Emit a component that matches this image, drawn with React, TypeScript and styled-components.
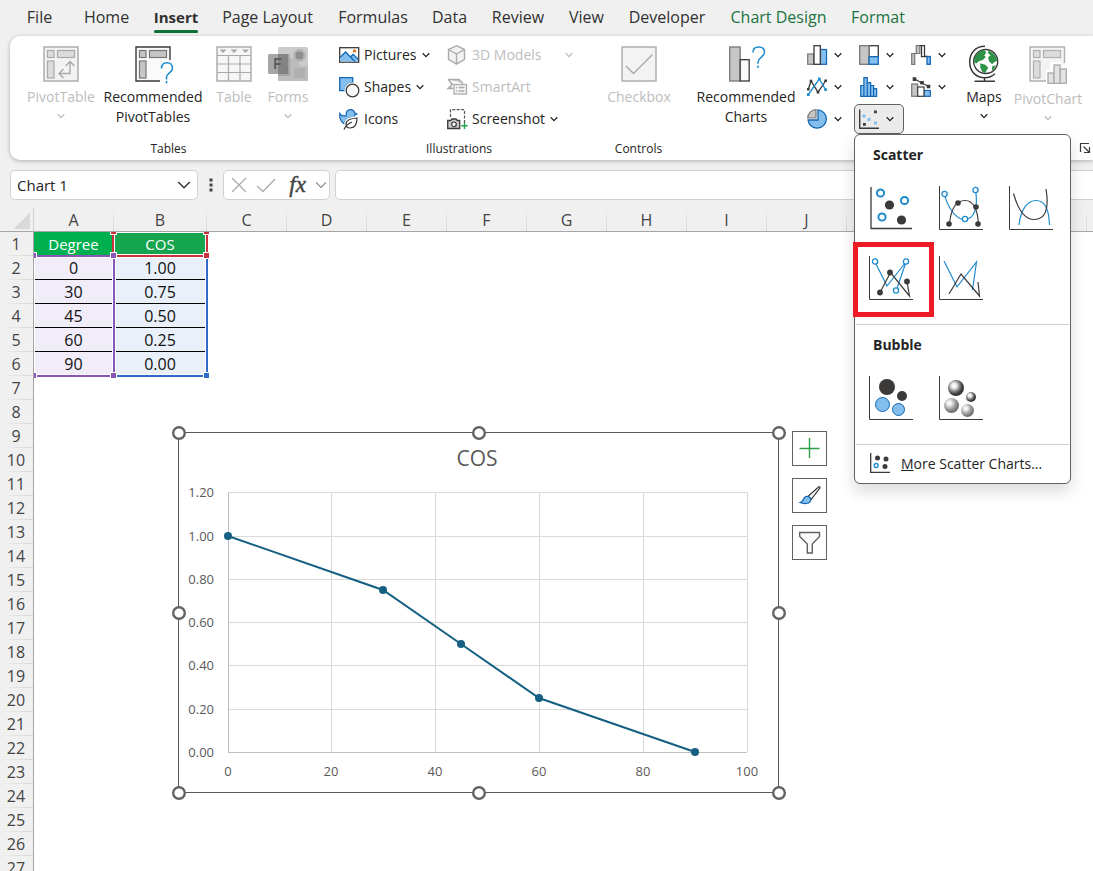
import React from "react";
import styled, { createGlobalStyle } from "styled-components";

const GlobalStyle = createGlobalStyle`
  *, *::before, *::after { box-sizing: border-box; }
  body {
    margin: 0;
    background: #f0f0f0;
    color: #242424;
    font-family: "Open Sans", "Noto Sans", sans-serif;
    font-size: 14px;
  }
  button { font: inherit; color: inherit; background: none; border: 0; padding: 0; }
  svg { display: block; flex: none; overflow: visible; }
`;

const INK = "#3b3a39";
const BLUE = "#1e8bcd";
const BLUE_FILL = "#83beec";
const BLUE_EDGE = "#1267b4";
const GREY_FILL = "#c8c6c4";

/* ---------- page ---------- */

const Page = styled.div`
  display: flex;
  flex-direction: column;
  height: 100vh;
  overflow: hidden;
`;

const TabBar = styled.nav`
  display: flex;
  height: 36px;
  padding-left: 15px;
`;

const Tab = styled.button<{ $w: number; $active?: boolean; $accent?: boolean }>`
  position: relative;
  min-width: ${(p) => p.$w}px;
  height: 34px;
  font-size: ${(p) => (p.$active ? 15 : 16)}px;
  line-height: 34px;
  white-space: nowrap;
  font-weight: ${(p) => (p.$active ? 700 : 400)};
  color: ${(p) => (p.$accent ? "#1a7340" : "#303030")};
  &::after {
    content: "";
    display: ${(p) => (p.$active ? "block" : "none")};
    position: absolute;
    left: 5px;
    right: 5px;
    bottom: 1px;
    height: 3px;
    border-radius: 2px;
    background: #0f7038;
  }
`;

const Ribbon = styled.div`
  position: relative;
  z-index: 5;
  display: flex;
  height: 124px;
  margin-left: 10px;
  background: #fff;
  border-radius: 10px 0 0 10px;
  box-shadow: 0 1px 4px rgba(0, 0, 0, 0.28);
`;

const Group = styled.section<{ $w?: number; $pad?: number }>`
  position: relative;
  display: flex;
  flex-direction: column;
  justify-content: space-between;
  width: ${(p) => (p.$w ? p.$w + "px" : "auto")};
  flex: ${(p) => (p.$w ? "none" : "1")};
  padding: 4px 0 3px ${(p) => p.$pad ?? 0}px;
  & + &::before {
    content: "";
    position: absolute;
    left: -1px;
    top: 6px;
    bottom: 8px;
    width: 1px;
    background: #d1d1d1;
  }
`;

const GroupBody = styled.div`
  display: flex;
`;

const GroupLabel = styled.div<{ $pull?: number }>`
  margin-left: -${(p) => p.$pull ?? 0}px;
  text-align: center;
  font-size: 12px;
  line-height: 16px;
`;

const BigButton = styled.button<{ $w: number; $off?: boolean }>`
  display: flex;
  flex-direction: column;
  align-items: center;
  gap: 5px;
  width: ${(p) => p.$w}px;
  padding-top: 6px;
  line-height: 20px;
  white-space: nowrap;
  color: ${(p) => (p.$off ? "#bdbdbd" : "#242424")};
`;

const BigText = styled.span`
  display: flex;
  flex-direction: column;
  align-items: center;
  gap: 5px;
`;

const Stack = styled.div<{ $w: number }>`
  display: flex;
  flex-direction: column;
  width: ${(p) => p.$w}px;
`;

const SmallButton = styled.button<{ $off?: boolean }>`
  display: flex;
  align-items: center;
  height: 32px;
  gap: 5px;
  padding-bottom: 2px;
  line-height: 20px;
  white-space: nowrap;
  color: ${(p) => (p.$off ? "#bdbdbd" : "#242424")};
`;

const Spacer = styled.span`
  width: 14px;
`;

const ChartGrid = styled.div`
  display: grid;
  grid-template-columns: repeat(3, 50px);
  grid-auto-rows: 30px;
  gap: 2px;
  margin: 0 0 0 2px;
`;

const MiniButton = styled.button<{ $open?: boolean }>`
  display: flex;
  align-items: center;
  gap: 7px;
  width: 50px;
  height: 30px;
  padding-left: 4px;
  border: 1px solid ${(p) => (p.$open ? "#616161" : "transparent")};
  border-radius: 5px;
  background: ${(p) => (p.$open ? "#ebebeb" : "transparent")};
`;

const MenuAnchor = styled.div`
  position: relative;
`;

const Launcher = styled.button`
  align-self: flex-end;
  margin: 0 3px 4px 0;
`;

/* ---------- scatter menu ---------- */

const Menu = styled.div`
  position: absolute;
  z-index: 10;
  top: 100%;
  left: 0;
  width: 217px;
  background: #fff;
  border: 1px solid #616161;
  border-radius: 6px;
  box-shadow: 0 8px 16px rgba(0, 0, 0, 0.14);
`;

const MenuTitle = styled.h3`
  margin: 0;
  padding: 10px 0 8px 18px;
  font-size: 14px;
  line-height: 20px;
  font-weight: 700;
`;

const Gallery = styled.div`
  display: grid;
  grid-template-columns: repeat(3, 70px);
  grid-auto-rows: 70px;
  padding-left: 1px;
`;

const GalleryItem = styled.button`
  position: relative;
  display: grid;
  place-items: center;
`;

const Highlight = styled.span`
  position: absolute;
  inset: -1px -8px -4px -3px;
  border: 5px solid #ed1c24;
  pointer-events: none;
`;

const Rule = styled.hr`
  margin: 11px 1px 0;
  border: 0;
  border-top: 1px solid #d1d1d1;
`;

const MenuItem = styled.button`
  display: flex;
  align-items: center;
  gap: 11px;
  width: 100%;
  height: 38px;
  padding: 0 0 2px 15px;
  white-space: nowrap;
`;

/* ---------- formula bar ---------- */

const FormulaBar = styled.div`
  display: flex;
  align-items: center;
  height: 30px;
  margin: 10px 0 0 10px;
`;

const Field = styled.div<{ $w?: number }>`
  display: flex;
  align-items: center;
  height: 30px;
  width: ${(p) => (p.$w ? p.$w + "px" : "auto")};
  flex: ${(p) => (p.$w ? "none" : "1")};
  padding: 0 6px;
  justify-content: space-between;
  background: #fff;
  border: 1px solid #d1d1d1;
  border-radius: 5px;
`;

const FxField = styled(Field)`
  padding: 0 2px 0 7px;
`;

const OpenField = styled(Field)`
  border-right: 0;
  border-radius: 5px 0 0 5px;
`;

const TextInput = styled.input`
  flex: 1;
  min-width: 0;
  border: 0;
  outline: 0;
  padding: 0;
  background: transparent;
  color: #242424;
  font: 15px "Open Sans", sans-serif;
`;

const Dots = styled.span`
  display: grid;
  place-items: center;
  width: 25px;
`;

const Fx = styled.button`
  padding-left: 4px;
  font: italic 400 23px/24px "Liberation Serif", serif;
  -webkit-text-stroke: 0.4px currentColor;
  color: #424242;
`;

const Gap = styled.span`
  width: 5px;
`;

/* ---------- sheet ---------- */

const Sheet = styled.main`
  position: relative;
  flex: 1;
  margin-top: 8px;
  overflow: hidden;
  background: linear-gradient(#f0f0f0 23px, #a6a6a6 23px, #a6a6a6 24px, #fff 24px);
`;

const Grid = styled.table`
  table-layout: fixed;
  width: 1087px;
  border-collapse: separate;
  border-spacing: 0;
  font-size: 16px;
  line-height: 22px;
  text-align: center;
  td, th { height: 24px; padding: 0 1px 0 0; font-weight: 400; }
`;

const ColHead = styled.th`
  color: #444;
  background: linear-gradient(#f0f0f0, #d6d6d6) right / 1px 100% no-repeat, #f0f0f0;
  border-bottom: 1px solid #a6a6a6;
`;

const Corner = styled.th`
  background: linear-gradient(135deg, transparent 50%, #d9d9d9 50%) 14px 5px / 16px 16px no-repeat, #f0f0f0;
  border-right: 1px solid #d0d0d0;
  border-bottom: 1px solid #a6a6a6;
`;

const RowHead = styled.th`
  color: #444;
  background: linear-gradient(90deg, #f0f0f0, #d6d6d6) bottom / 100% 1px no-repeat, #f0f0f0;
  border-right: 1px solid #a6a6a6;
`;

const TitleCell = styled.td<{ $bg: string }>`
  color: #fff;
  font-size: 15px;
  background: ${(p) => p.$bg};
`;

const DataCell = styled.td<{ $bg: string; $last: boolean }>`
  color: #111;
  background: ${(p) => p.$bg};
  border-bottom: 1px solid ${(p) => (p.$last ? "transparent" : "#000")};
`;

/* range outlines are clipped by the row and column headers */
const Ranges = styled.div`
  position: absolute;
  inset: 24px 0 0 34px;
  overflow: hidden;
  pointer-events: none;
`;

const Range = styled.div<{ $c: string; $x: number; $y: number; $w: number; $h: number; $open: string }>`
  position: absolute;
  left: ${(p) => p.$x}px;
  top: ${(p) => p.$y}px;
  width: ${(p) => p.$w}px;
  height: ${(p) => p.$h}px;
  border: 2px solid ${(p) => p.$c};
  border-${(p) => p.$open}: 0;
  box-shadow: inset 0 0 0 1px #fff;
`;

const Handle = styled.span<{ $c: string; $x: number; $y: number }>`
  position: absolute;
  left: ${(p) => p.$x}px;
  top: ${(p) => p.$y}px;
  width: 7px;
  height: 7px;
  border: 1px solid #fff;
  background: ${(p) => p.$c};
`;

const ChartBox = styled.figure`
  position: absolute;
  left: 170px;
  top: 216px;
  margin: 0;
  display: flex;
  gap: 2px;
`;

const ChartTools = styled.div`
  display: flex;
  flex-direction: column;
  gap: 12px;
  padding-top: 7px;
`;

const ToolButton = styled.button`
  display: grid;
  place-items: center;
  width: 35px;
  height: 35px;
  background: #fff;
  border: 1px solid #616161;
`;

/* ---------- icons ---------- */

const Icon = ({ w = 20, h = w, children }: { w?: number; h?: number; children: React.ReactNode }) => (
  <svg width={w} height={h} viewBox={`0 0 ${w} ${h}`} fill="none" aria-hidden="true">
    {children}
  </svg>
);

const Chevron = ({ c = "#242424", w = 8 }: { c?: string; w?: number }) => (
  <svg width={w} height={w} viewBox="0 0 8 8" fill="none" stroke={c} strokeWidth={w > 8 ? 0.8 : 1.3} aria-hidden="true">
    <path d="M.7 2.3 4 5.6l3.3-3.3" />
  </svg>
);

const PivotIcon = () => (
  <Icon w={36}>
    <rect x="1" y="1" width="34" height="34" fill="#f3f3f3" stroke="#a9a9a9" strokeWidth="1.4" />
    <g fill="#dcdcdc" stroke="#a9a9a9" strokeWidth="1.2">
      <rect x="4.5" y="4.5" width="6.5" height="7" />
      <rect x="14.5" y="4.5" width="17" height="7" />
      <rect x="4.5" y="15" width="6.5" height="17" />
    </g>
    <path d="M16.500 27.500h10.500V15.500M20.500 23l-4.500 4.500 4.500 4.500M22.500 20l4.500-4.500 4.500 4.500" stroke="#a9a9a9" strokeWidth="1.4" />
  </Icon>
);

const RecPivotIcon = () => (
  <Icon w={36}>
    <path d="M35 14V1H1v34h27" fill="#fafafa" stroke={INK} strokeWidth="1.4" />
    <g fill={GREY_FILL} stroke="#797775" strokeWidth="1.2">
      <rect x="4.500" y="4.500" width="6.500" height="7" />
      <rect x="14.500" y="4.500" width="17" height="7" />
      <rect x="4.500" y="15" width="6.500" height="17" />
    </g>
    <path d="M25 37V22l5-7h9v22z" fill="#fff" />
    <path d="M26.500 22.500c0-3.500 2-5.800 5.300-5.800s5.700 2 5.700 5.200c0 5-6 5-6 9.600v2M31.500 35v2.500" stroke={BLUE} strokeWidth="1.6" />
  </Icon>
);

const TableIcon = () => (
  <Icon w={36}>
    <rect x="1" y="1" width="34" height="34" fill="#f6f6f6" stroke="#a9a9a9" strokeWidth="1.4" />
    <path d="M1 9.500h34M1 18h34M1 26.500h34M12.500 9.500V35M24 9.500V35" stroke="#a9a9a9" strokeWidth="1.2" />
    <path d="M3.500 3.500h7l-3.500 3.500zM14.500 3.500h7L18 7zM26 3.500h7L29.500 7z" fill="#a9a9a9" />
  </Icon>
);

const FormsIcon = () => (
  <Icon w={40} h={36}>
    <rect x="10" y="1" width="30" height="34" rx="1.500" fill="#cbcbcb" />
    <path d="M10 12h17l6 8h7v13.500a1.500 1.500 0 0 1-1.500 1.500H11.500a1.500 1.500 0 0 1-1.500-1.500z" fill="#bcbcbc" />
    <circle cx="31.500" cy="9.500" r="6.500" fill="#b4b4b4" />
    <circle cx="31.500" cy="9.500" r="4" fill="#8e8e8e" />
    <rect x="26" y="22" width="11" height="10" fill="#b0b0b0" />
    <rect x="10" y="8" width="12" height="22" fill="#8c8c8c" opacity=".5" />
    <rect x="0" y="8" width="20" height="20" rx="1.500" fill="#969696" opacity=".85" />
    <rect x="10" y="8" width="10" height="20" fill="#7a7a7a" opacity=".7" />
    <path d="M7.200 23V13h6.300M7.200 18h5.500" stroke="#5d5d5d" strokeWidth="2" />
  </Icon>
);

const PicturesIcon = () => (
  <Icon>
    <rect x=".7" y="2.700" width="19" height="14.500" fill="#fff" stroke={INK} strokeWidth="1.300" />
    <path d="M1.500 12l5-5 9.500 9.500H1.500z" fill={BLUE_FILL} />
    <path d="M11 11.500l3-3 5 5v3h-3z" fill={BLUE_FILL} />
    <path d="M1 12.500l5.500-5.500 9.500 9.500M11.500 12l2.700-2.700 5 5" stroke={BLUE_EDGE} strokeWidth="1.300" />
    <circle cx="15.500" cy="6" r="1.700" fill="#e07a28" />
  </Icon>
);

const ShapesIcon = () => (
  <Icon>
    <path d="M.7.700h13v4.800c-5 1-7.500 4-7.500 8.200H.700z" fill={BLUE_FILL} stroke={BLUE_EDGE} strokeWidth="1.300" />
    <circle cx="13.500" cy="13.500" r="8" fill="#fff" />
    <circle cx="13.500" cy="13.500" r="6.300" fill="#fafafa" stroke={INK} strokeWidth="1.300" />
  </Icon>
);

const IconsIcon = () => (
  <Icon>
    <path d="M.8 4.500C2 6.800 4.500 7.300 7.200 6.600 6.500 2.800 8.800.600 11.500.600c2.200 0 3.700 1.300 4.100 3.200l2.200 1.100-2.200 1.200c-.2 1-.6 1.500-1.200 2C9.500 8.500 6.200 10.800 5.700 15 2.500 13.500.300 9.500.800 4.500z" fill={BLUE_FILL} stroke={BLUE_EDGE} strokeWidth="1.200" />
    <path d="M18 9c-7 .4-11 2-11 6.300 0 2.500 1.800 3.700 4 3.700 5 0 7-4.500 7-10z" fill="#fff" stroke="#fff" strokeWidth="3.500" />
    <path d="M18 9c-7 .4-11 2-11 6.300 0 2.500 1.800 3.700 4 3.700 5 0 7-4.500 7-10zM5 20.500c1.500-4 4-5.800 8-7.500" fill="#fff" stroke={INK} strokeWidth="1.200" />
  </Icon>
);

const CubeIcon = () => (
  <Icon>
    <path d="M9.500.700l8 3.800v9.800l-8 4.800-8-4.800V4.500z" fill="#f3f3f3" stroke="#ababab" strokeWidth="1.400" />
    <path d="M1.500 4.500l8 4.500 8-4.500M9.500 9v10" stroke="#ababab" strokeWidth="1.400" />
  </Icon>
);

const SmartArtIcon = () => (
  <Icon>
    <path d="M1 2.500h11l4 4M1 2.500L5.500 7 1 11.500h5" fill="#cfcfcf" stroke="#ababab" strokeWidth="1.400" />
    <rect x="7" y="7.500" width="12.500" height="9.500" fill="#f3f3f3" stroke="#ababab" strokeWidth="1.300" />
    <path d="M9 10.500h1M11.500 10.500h6M9 14h1M11.500 14h6" stroke="#ababab" strokeWidth="1.300" />
  </Icon>
);

const ScreenshotIcon = () => (
  <Icon>
    <path d="M3.500 8V.700h14V14" stroke="#555" strokeWidth="1.200" strokeDasharray="3 1.500" />
    <path d="M.700 11.500h3l1.300-1.500h4l1.300 1.500h2.400v8h-12z" fill={GREY_FILL} stroke={INK} strokeWidth="1.300" />
    <circle cx="7" cy="15.300" r="2.300" fill="#fff" stroke={INK} strokeWidth="1.200" />
    <path d="M17.500 13.500v6.500M14.200 16.800h6.500" stroke="#2da04b" strokeWidth="1.500" />
  </Icon>
);

const CheckIcon = () => (
  <Icon w={36}>
    <rect x="1" y="1" width="34" height="34" fill="#f3f3f3" stroke="#a9a9a9" strokeWidth="1.400" />
    <path d="M5 20l7.500 7.500L31.500 8.500" stroke="#a9a9a9" strokeWidth="1.400" />
  </Icon>
);

const RecChartsIcon = () => (
  <Icon w={34} h={36}>
    <rect x=".7" y="1" width="10.500" height="34" fill={GREY_FILL} stroke="#797775" strokeWidth="1.300" />
    <rect x="11.200" y="13.700" width="9" height="21.300" fill="#fafafa" stroke={INK} strokeWidth="1.300" />
    <path d="M24 6.500c0-3.500 2-5.600 5.500-5.600s6 2 6 5.200c0 5.200-6.500 5.200-6.500 10v1.700M29 19.500V22" stroke={BLUE} strokeWidth="1.500" />
  </Icon>
);

const ColumnIcon = () => (
  <Icon>
    <rect x=".7" y="9" width="6" height="10.300" fill={GREY_FILL} stroke="#797775" strokeWidth="1.200" />
    <rect x="13.500" y="4.500" width="6" height="14.800" fill={BLUE_FILL} stroke={BLUE_EDGE} strokeWidth="1.200" />
    <rect x="7" y=".7" width="6.300" height="18.600" fill="#fff" stroke={INK} strokeWidth="1.300" />
  </Icon>
);

const TreemapIcon = () => (
  <Icon>
    <rect x="10" y=".700" width="9.300" height="11" fill="#fff" stroke={INK} strokeWidth="1.300" />
    <rect x=".7" y=".700" width="9.300" height="18.600" fill={GREY_FILL} stroke="#797775" strokeWidth="1.300" />
    <rect x="10" y="11.700" width="9.300" height="7.600" fill={BLUE_FILL} stroke={BLUE_EDGE} strokeWidth="1.300" />
  </Icon>
);

const WaterfallIcon = () => (
  <Icon>
    <path d="M.700 19.300V8.500h3V19.300zM5.300 8.500V.700h3.500v7.800z" fill={GREY_FILL} stroke="#797775" strokeWidth="1.200" />
    <path d="M3 8.500h3" stroke="#797775" strokeWidth="1.200" />
    <path d="M8.800.700h4.700v11h-3V.700M13.500 11.500h3" stroke={INK} strokeWidth="1.300" fill="#fff" />
    <rect x="16" y="11.500" width="3.300" height="7.800" fill={BLUE_FILL} stroke={BLUE_EDGE} strokeWidth="1.300" />
  </Icon>
);

const LineIcon = () => (
  <Icon>
    <path d="M1.300 12.300L4 4l7 11.200L18.500 4" stroke={INK} strokeWidth="1.300" />
    <path d="M1.300 17.500L12.300 2l6.200 10.500" stroke={BLUE} strokeWidth="1.300" />
    <path d="M2.700 2.700h2.600v2.600H2.700zM0 11h2.600v2.600H0zM9.700 14h2.600v2.600H9.700zM17.300 2.500h2.600v2.600h-2.600z" fill={INK} />
    <path d="M11 .500h2.600v2.600H11zM0 16.300h2.600v2.600H0zM17.300 11.300h2.600v2.600h-2.600z" fill={BLUE} />
  </Icon>
);

const HistogramIcon = () => (
  <Icon>
    <path d="M1.700 19.300v-10.800h3.200v10.800zM4.900 19.300V.700h3.400v18.600zM8.300 19.300V5.700h3.300v13.600zM11.600 19.300V8.500h3v10.800zM14.600 19.300v-7.600h3v7.600z" fill={BLUE_FILL} stroke={BLUE_EDGE} strokeWidth="1.200" />
  </Icon>
);

const ComboIcon = () => (
  <Icon>
    <rect x=".7" y="7" width="6" height="12.300" fill={GREY_FILL} stroke="#797775" strokeWidth="1.200" />
    <rect x="13" y="13.500" width="6.300" height="5.800" fill={BLUE_FILL} stroke={BLUE_EDGE} strokeWidth="1.200" />
    <rect x="6.700" y="10" width="6.300" height="9.300" fill="#fff" stroke={INK} strokeWidth="1.200" />
    <path d="M3.500 2l7.500 4 6.500 3.500" stroke={INK} strokeWidth="1.300" />
    <path d="M1.700.300h3.600v3.600H1.700zM9.200 4h3.600v3.600H9.200zM15.700 7.700h3.600v3.600h-3.600z" fill={INK} />
  </Icon>
);

const PieIcon = () => (
  <Icon>
    <path d="M11 .800a9.200 9.200 0 1 1-10 10.200h10z" fill={BLUE_FILL} stroke={BLUE_EDGE} strokeWidth="1.300" />
    <path d="M9 .700V9H.700A8.500 8.500 0 0 1 9 .700z" fill={GREY_FILL} stroke="#797775" strokeWidth="1.200" />
  </Icon>
);

const ScatterIcon = () => (
  <Icon>
    <path d="M.700.500v18.800H20" stroke={INK} strokeWidth="1.400" />
    <path d="M15 1.500h2.800v2.800H15zM4 14h2.800v2.800H4z" fill={INK} />
    <path d="M3.500 5.500h3v3h-3zM8.500 9h3v3h-3zM15 12.500h3v3h-3z" fill={BLUE_FILL} />
  </Icon>
);

const GlobeIcon = () => (
  <Icon w={32} h={36}>
    <path d="M17 .2C7 .2 1.700 7.500 1.700 16c0 10 7 15.700 15 15.700 4 0 7.500-1.300 10.300-4M16.500 31.700v3.500M6.500 35.200h20.500" stroke={INK} strokeWidth="1.500" />
    <circle cx="17.700" cy="15.500" r="12" fill="#fff" stroke={INK} strokeWidth="1.400" />
    <g transform="translate(.3 -.7)">
      <path d="M9 8c2-2 5-3 7-3.200l2 2.500-2 3 1.500 1.500-3 3-3.500 1-3 2.500L5.800 17C6 13 7 10 9 8zM20 5l5 3 3 4 .8 3.500-3 1.500-2 2-3-3-1-4 2.500-2-2.500-2zM12 18l5 1.500 3 3-2 3-1 2.500-3-1.500-2-4zM24 21l3.500-1-2 4-2 1.500z" fill="#2e9148" />
    </g>
  </Icon>
);

const PivotChartIcon = () => (
  <Icon w={38}>
    <path d="M35.500 17V1H1v34h17" fill="#f3f3f3" stroke="#b0b0b0" strokeWidth="1.400" />
    <g fill="#dcdcdc" stroke="#b0b0b0" strokeWidth="1.200">
      <rect x="4.500" y="4.500" width="6.500" height="7" />
      <rect x="14.500" y="4.500" width="17" height="7" />
      <rect x="4.500" y="15" width="6.500" height="17" />
    </g>
    <path d="M17 38V24h4v-8h11v6h6v16z" fill="#fff" />
    <g fill="#e3e3e3" stroke="#a9a9a9" strokeWidth="1.300">
      <rect x="19" y="27" width="6" height="10.300" />
      <rect x="31" y="23" width="6.300" height="14.300" />
      <rect x="25" y="19" width="6" height="18.300" />
    </g>
  </Icon>
);

const LauncherIcon = () => (
  <Icon w={10}>
    <path d="M.500 9V.500H9M3.500 3.500l5.500 5.500M9.500 4v5.500H4" stroke={INK} strokeWidth="1.200" />
  </Icon>
);

const Axes = () => <path d="M.500 0v43.500H44" stroke={INK} />;

const ScatterDots = () => (
  <Icon w={44}>
    <path d="M2 1v41.500h41" stroke={INK} strokeWidth="1.300" />
    <g stroke={BLUE} strokeWidth="2" fill="#fff">
      <circle cx="11.500" cy="7" r="3.600" />
      <circle cx="35.500" cy="14.500" r="3.600" />
      <circle cx="13" cy="31" r="3.600" />
    </g>
    <circle cx="20.500" cy="19" r="4.600" fill={INK} />
    <circle cx="32.500" cy="34" r="4.600" fill={INK} />
  </Icon>
);

const SMOOTH_BLUE = "M5.500 8c2 10 10 25.500 20 25.500C35 33.500 39.500 22 36.500 4";
const SMOOTH_DARK = "M10.500 38C12 22 18 14.500 26 14.500S38.500 22 39.500 38";

const SmoothMarkers = () => (
  <Icon w={44}>
    <Axes />
    <path d={SMOOTH_BLUE} stroke={BLUE} strokeWidth="1.200" />
    <path d={SMOOTH_DARK} stroke={INK} strokeWidth="1.200" />
    <g stroke={BLUE} strokeWidth="1.300" fill="#fff">
      <circle cx="5.500" cy="8" r="2.600" />
      <circle cx="36.500" cy="4" r="2.600" />
      <circle cx="26" cy="33" r="2.600" />
    </g>
    <g fill={INK}>
      <circle cx="10" cy="38" r="2.800" />
      <circle cx="19" cy="17" r="2.800" />
      <circle cx="37" cy="21" r="2.800" />
      <circle cx="39" cy="38" r="2.800" />
    </g>
  </Icon>
);

const SmoothLines = () => (
  <Icon w={44}>
    <Axes />
    <path d="M10 39C12 22 19 14.500 27 14.500S40 22 40.500 39" stroke={BLUE} strokeWidth="1.200" />
    <path d="M4.500 7.500C8 20 14 33.500 25 33.500S40.500 24 37 3" stroke={INK} strokeWidth="1.200" />
  </Icon>
);

const StraightMarkers = () => (
  <Icon w={44}>
    <Axes />
    <path d="M6 6l12 24L37 6l-9.500 28" stroke={BLUE} strokeWidth="1.200" />
    <path d="M11 36.500l10.500-20L40.500 40 38 25.500" stroke={INK} strokeWidth="1.200" />
    <g stroke={BLUE} strokeWidth="1.300" fill="#fff">
      <circle cx="6" cy="5.500" r="2.600" />
      <circle cx="37" cy="5.500" r="2.600" />
      <circle cx="27" cy="34.500" r="2.600" />
    </g>
    <g fill={INK}>
      <circle cx="11" cy="36.500" r="2.900" />
      <circle cx="21" cy="16.500" r="2.900" />
      <circle cx="38" cy="25.500" r="2.900" />
    </g>
  </Icon>
);

const StraightLines = () => (
  <Icon w={44}>
    <Axes />
    <path d="M5 5l13 26L37.500 6l-4 28" stroke={BLUE} strokeWidth="1.200" />
    <path d="M10 38l12-20 18.500 22L39 26" stroke={INK} strokeWidth="1.200" />
  </Icon>
);

const Bubbles = () => (
  <Icon w={44}>
    <Axes />
    <circle cx="18" cy="11" r="8" fill={INK} />
    <circle cx="33" cy="20" r="5" fill={INK} />
    <circle cx="13.500" cy="28.500" r="7" fill={BLUE_FILL} stroke={BLUE_EDGE} />
    <circle cx="29.500" cy="33.500" r="6" fill={BLUE_FILL} stroke={BLUE_EDGE} />
  </Icon>
);

const Bubbles3D = () => (
  <Icon w={44}>
    <defs>
      <radialGradient id="dark-ball" cx=".38" cy=".36" r=".62">
        <stop offset="0" stopColor="#fff" />
        <stop offset=".25" stopColor="#eee" />
        <stop offset=".55" stopColor="#8a8a8a" />
        <stop offset=".85" stopColor={INK} />
      </radialGradient>
      <radialGradient id="light-ball" cx=".36" cy=".34" r=".66">
        <stop offset="0" stopColor="#fff" />
        <stop offset=".2" stopColor="#f1f1f1" />
        <stop offset=".55" stopColor="#aaa" />
        <stop offset=".9" stopColor="#757371" />
      </radialGradient>
    </defs>
    <Axes />
    <circle cx="17" cy="12" r="8" fill="url(#dark-ball)" />
    <circle cx="32" cy="21" r="5" fill="url(#dark-ball)" />
    <circle cx="12.500" cy="29.500" r="7.500" fill="url(#light-ball)" />
    <circle cx="28.500" cy="34.500" r="6.500" fill="url(#light-ball)" />
  </Icon>
);

const MoreIcon = () => (
  <Icon>
    <path d="M.700 0v19.300H20" stroke={INK} strokeWidth="1.300" />
    <circle cx="7.500" cy="5" r="2.500" fill={INK} />
    <circle cx="16" cy="6" r="2.500" fill={INK} />
    <circle cx="15" cy="13.500" r="2.500" fill={INK} />
    <circle cx="6.200" cy="12.500" r="2" stroke={BLUE} strokeWidth="1.300" />
  </Icon>
);

/* ---------- data ---------- */

const tabs: [string, number][] = [
  ["File", 49],
  ["Home", 85],
  ["Insert", 54],
  ["Page Layout", 129],
  ["Formulas", 82],
  ["Data", 71],
  ["Review", 66],
  ["View", 71],
  ["Developer", 90],
  ["Chart Design", 133],
  ["Format", 66],
];

const miniCharts: [string, React.FC][] = [
  ["Column", ColumnIcon],
  ["Treemap", TreemapIcon],
  ["Waterfall", WaterfallIcon],
  ["Line", LineIcon],
  ["Histogram", HistogramIcon],
  ["Combo", ComboIcon],
  ["Pie", PieIcon],
  ["Scatter", ScatterIcon],
];

const scatterItems: [string, React.FC][] = [
  ["Scatter only", ScatterDots],
  ["Smooth lines and markers", SmoothMarkers],
  ["Smooth lines", SmoothLines],
  ["Straight lines and markers", StraightMarkers],
  ["Straight lines", StraightLines],
];

const columns = "ABCDEFGHIJKLM".split("");
const records = [
  ["0", "1.00"],
  ["30", "0.75"],
  ["45", "0.50"],
  ["60", "0.25"],
  ["90", "0.00"],
];
const rows = Array.from({ length: 27 }, (_, i) => i + 1);

const PURPLE = "#8a57b8";
const RED = "#c8323c";
const RANGE_BLUE = "#2f6bc8";

const px = (deg: number) => Math.floor(58 + deg * 5.19);
const py = (v: number) => Math.round(328 - v * 216.4);

const ScatterChart = () => (
  <svg width="620" height="380" viewBox="0 0 620 380" role="img" aria-label="COS by Degree">
    <rect x="8.500" y="8.500" width="600" height="360" fill="#fff" stroke="#595959" />
    <text x="307" y="42" textAnchor="middle" fontSize="21" fill="#595959">COS</text>
    <g stroke="#d9d9d9">
      {[0, 0.2, 0.4, 0.6, 0.8, 1, 1.2].map((v) => (
        <path key={v} d={`M58 ${py(v) + 0.5}H577`} stroke={v === 0 ? "#bfbfbf" : undefined} />
      ))}
      {[0, 20, 40, 60, 80, 100].map((d) => (
        <path key={d} d={`M${px(d) + 0.5} 68V328`} stroke={d === 0 ? "#bfbfbf" : undefined} />
      ))}
    </g>
    <g fontSize="13" fill="#595959">
      {[0, 0.2, 0.4, 0.6, 0.8, 1, 1.2].map((v) => (
        <text key={v} x="44" y={py(v) + 5} textAnchor="end">{v.toFixed(2)}</text>
      ))}
      {[0, 20, 40, 60, 80, 100].map((d) => (
        <text key={d} x={px(d)} y="352" textAnchor="middle">{d}</text>
      ))}
    </g>
    <polyline
      points={records.map(([d, v]) => `${px(+d)},${py(+v)}`).join(" ")}
      fill="none"
      stroke="#156082"
      strokeWidth="2"
    />
    {records.map(([d, v]) => (
      <circle key={d} cx={px(+d)} cy={py(+v)} r="4" fill="#156082" />
    ))}
    {[9, 189, 369].map((y) =>
      [9, 309, 609].map((x) =>
        x === 309 && y === 189 ? null : (
          <circle key={`${x}-${y}`} cx={x} cy={y} r="5.800" fill="#fff" stroke="#636363" strokeWidth="2.400" />
        ),
      ),
    )}
  </svg>
);

const ScatterMenu = () => (
  <Menu role="menu" aria-label="Scatter charts">
    <MenuTitle>Scatter</MenuTitle>
    <Gallery>
      {scatterItems.map(([name, Glyph]) => (
        <GalleryItem key={name} aria-label={name}>
          <Glyph />
          {name === "Straight lines and markers" && <Highlight />}
        </GalleryItem>
      ))}
    </Gallery>
    <Rule />
    <MenuTitle>Bubble</MenuTitle>
    <Gallery>
      <GalleryItem aria-label="Bubble"><Bubbles /></GalleryItem>
      <GalleryItem aria-label="3-D bubble"><Bubbles3D /></GalleryItem>
    </Gallery>
    <Rule />
    <MenuItem>
      <MoreIcon />
      <span><u>M</u>ore Scatter Charts...</span>
    </MenuItem>
  </Menu>
);

export default function App() {
  return (
    <Page>
      <GlobalStyle />
      <TabBar>
        {tabs.map(([name, w]) => (
          <Tab key={name} $w={w} $active={name === "Insert"} $accent={name === "Chart Design" || name === "Format"}>
            {name}
          </Tab>
        ))}
      </TabBar>

      <Ribbon>
        <Group $w={314} $pad={13}>
          <GroupBody>
            <BigButton $w={76} $off><PivotIcon /><BigText>PivotTable<Chevron c="#bdbdbd" /></BigText></BigButton>
            <BigButton $w={108}><RecPivotIcon /><span>Recommended<br />PivotTables</span></BigButton>
            <BigButton $w={54} $off><TableIcon /><BigText>Table</BigText></BigButton>
            <BigButton $w={54} $off><FormsIcon /><BigText>Forms<Chevron c="#bdbdbd" /></BigText></BigButton>
          </GroupBody>
          <GroupLabel $pull={10}>Tables</GroupLabel>
        </Group>

        <Group $w={271} $pad={15}>
          <GroupBody>
            <Stack $w={108}>
              <SmallButton><PicturesIcon />Pictures<Chevron /></SmallButton>
              <SmallButton><ShapesIcon />Shapes<Chevron /></SmallButton>
              <SmallButton><IconsIcon />Icons</SmallButton>
            </Stack>
            <Stack $w={140}>
              <SmallButton $off><CubeIcon />3D Models<Spacer /><Chevron c="#bdbdbd" /></SmallButton>
              <SmallButton $off><SmartArtIcon />SmartArt</SmallButton>
              <SmallButton><ScreenshotIcon />Screenshot<Chevron /></SmallButton>
            </Stack>
          </GroupBody>
          <GroupLabel $pull={16}>Illustrations</GroupLabel>
        </Group>

        <Group $w={89}>
          <GroupBody>
            <BigButton $w={88} $off><CheckIcon /><BigText>Checkbox</BigText></BigButton>
          </GroupBody>
          <GroupLabel $pull={2}>Controls</GroupLabel>
        </Group>

        <Group $pad={8}>
          <GroupBody>
            <BigButton $w={108}><RecChartsIcon /><span>Recommended<br />Charts</span></BigButton>
            <ChartGrid>
              {miniCharts.map(([name, Glyph]) => (
                <MenuAnchor key={name}>
                  <MiniButton aria-label={name} $open={name === "Scatter"}><Glyph /><Chevron /></MiniButton>
                  {name === "Scatter" && <ScatterMenu />}
                </MenuAnchor>
              ))}
            </ChartGrid>
            <BigButton $w={56}><GlobeIcon /><BigText>Maps<Chevron /></BigText></BigButton>
            <BigButton $w={72} $off><PivotChartIcon /><BigText>PivotChart<Chevron c="#bdbdbd" /></BigText></BigButton>
          </GroupBody>
          <Launcher aria-label="Chart options"><LauncherIcon /></Launcher>
        </Group>
      </Ribbon>

      <FormulaBar>
        <Field $w={188}>
          <TextInput aria-label="Name box" defaultValue="Chart 1" />
          <Chevron w={14} c="#333" />
        </Field>
        <Dots>
          <Icon w={4} h={14}><path d="M.500.500h3v3h-3zM.500 5.500h3v3h-3zM.500 10.500h3v3h-3z" fill="#424242" /></Icon>
        </Dots>
        <FxField $w={107}>
          <Icon w={16}><path d="M1 1l14 14M15 1L1 15" stroke="#ababab" strokeWidth="1.300" /></Icon>
          <Icon w={20} h={16}><path d="M1 9l6 5.500L19 2" stroke="#ababab" strokeWidth="1.300" /></Icon>
          <Fx>fx</Fx>
          <Chevron w={12} c="#888" />
        </FxField>
        <Gap />
        <OpenField><TextInput aria-label="Formula" /></OpenField>
      </FormulaBar>

      <Sheet>
        <Grid>
          <colgroup>
            <col style={{ width: 34 }} />
            {columns.map((c) => <col key={c} style={{ width: c === "B" ? 93 : 80 }} />)}
          </colgroup>
          <thead>
            <tr>
              <Corner />
              {columns.map((c) => <ColHead key={c} scope="col">{c}</ColHead>)}
            </tr>
          </thead>
          <tbody>
            {rows.map((n) => {
              const rec = records[n - 2];
              return (
                <tr key={n}>
                  <RowHead scope="row">{n}</RowHead>
                  {n === 1 && (
                    <>
                      <TitleCell $bg="#00b050">Degree</TitleCell>
                      <TitleCell $bg="#15a54f">COS</TitleCell>
                    </>
                  )}
                  {rec && (
                    <>
                      <DataCell $bg="#f1edf8" $last={n === 6}>{rec[0]}</DataCell>
                      <DataCell $bg="#e9f0f9" $last={n === 6}>{rec[1]}</DataCell>
                    </>
                  )}
                  <td colSpan={rec || n === 1 ? 11 : 13} />
                </tr>
              );
            })}
          </tbody>
        </Grid>

        <Ranges>
          <Range $c={RED} $x={78} $y={0} $w={96} $h={25} $open="top" />
          <Range $c={RANGE_BLUE} $x={79} $y={25} $w={95} $h={120} $open="top" />
          <Range $c={PURPLE} $x={0} $y={23} $w={81} $h={122} $open="left" />
          <Handle $c={RED} $x={76} $y={-4} />
          <Handle $c={RED} $x={169} $y={-4} />
          <Handle $c={PURPLE} $x={-4} $y={20} />
          <Handle $c={PURPLE} $x={76} $y={20} />
          <Handle $c={RED} $x={169} $y={20} />
          <Handle $c={PURPLE} $x={-4} $y={140} />
          <Handle $c={PURPLE} $x={76} $y={140} />
          <Handle $c={RANGE_BLUE} $x={169} $y={140} />
        </Ranges>

        <ChartBox>
          <ScatterChart />
          <ChartTools>
            <ToolButton aria-label="Chart elements">
              <Icon w={22}><path d="M10.500 0v20M.500 10.500h20" stroke="#2da04b" strokeWidth="1.400" /></Icon>
            </ToolButton>
            <ToolButton aria-label="Chart styles">
              <Icon w={22}>
                <path d="M9 11.500L19.500 2c1-.8 2 .2 1.300 1.200L12 14.500z" fill="#fff" stroke={INK} strokeWidth="1.200" />
                <path d="M1 17.500c2.500-.5 3-1.800 3.500-3.500 1-3 5-3.500 7-.8 1 3-1 5-4 5.300-2.500.2-4.500 0-6.500-1z" fill={BLUE_FILL} stroke={BLUE_EDGE} strokeWidth="1.200" />
              </Icon>
            </ToolButton>
            <ToolButton aria-label="Chart filters">
              <Icon w={22}><path d="M.700.500h19.800v4L13.300 12v9h-5v-9L.700 4.500z" fill="#fafafa" stroke="#616161" strokeWidth="1.400" /></Icon>
            </ToolButton>
          </ChartTools>
        </ChartBox>
      </Sheet>
    </Page>
  );
}
